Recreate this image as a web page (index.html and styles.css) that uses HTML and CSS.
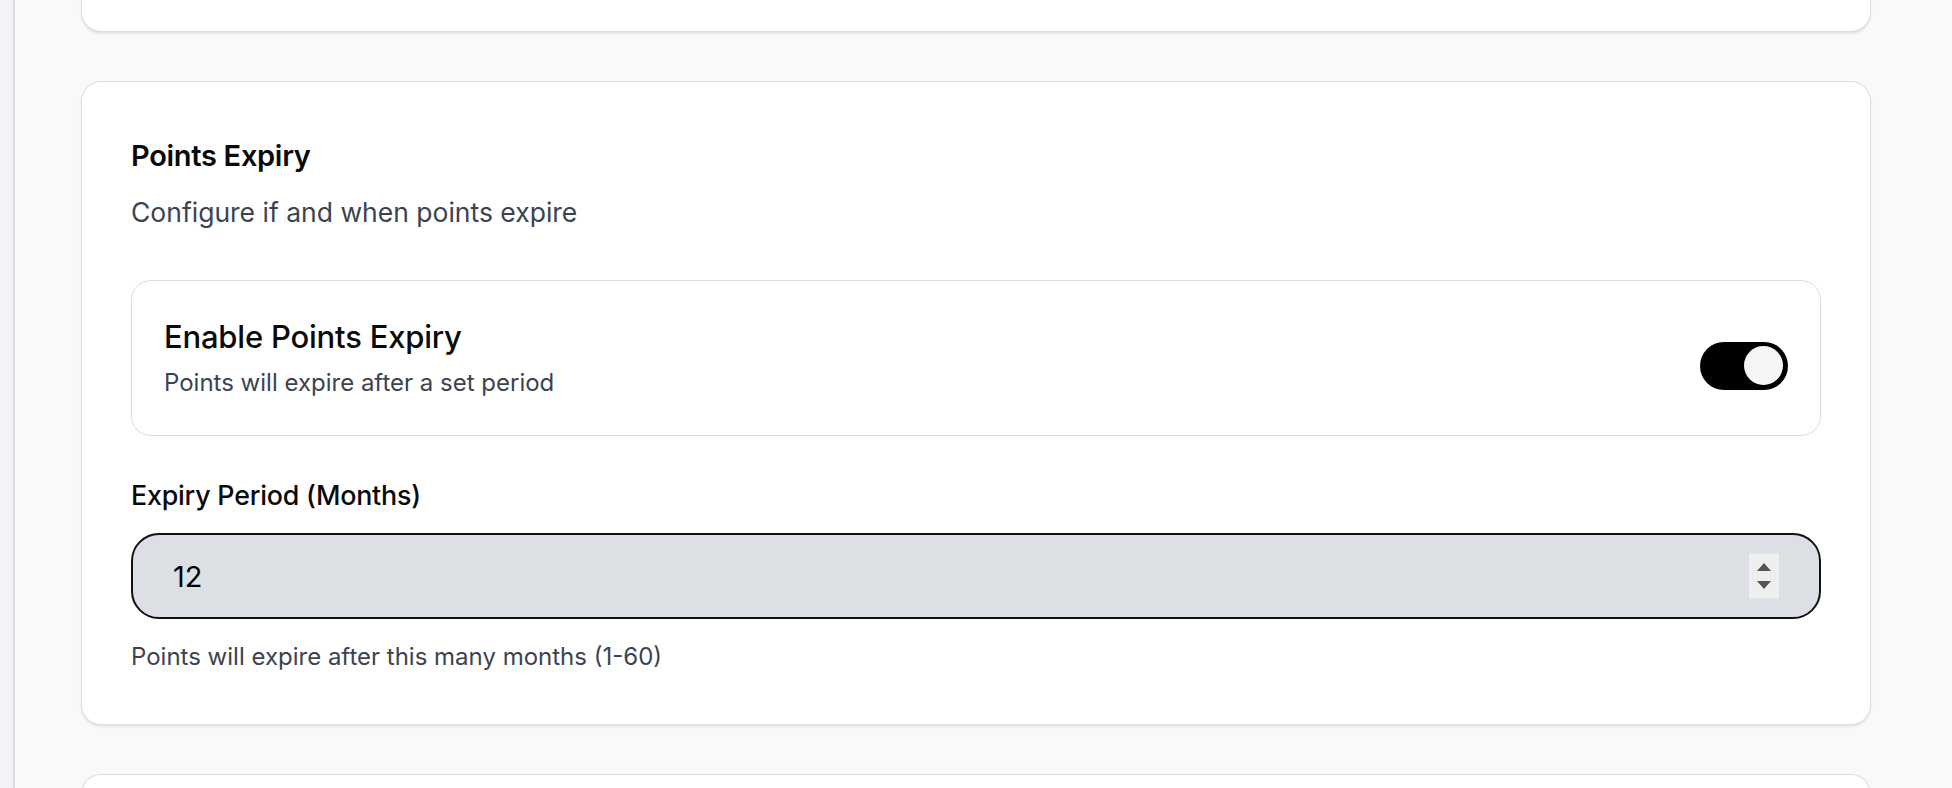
FILE: index.html
```html
<!DOCTYPE html>
<html lang="en">
<head>
  <meta charset="UTF-8">
  <title>Loyalty Settings</title>
  <meta name="viewport" content="width=device-width, initial-scale=1.0">
  <link rel="stylesheet" href="styles.css">
</head>
<body>
  <div class="layout">
    <aside class="sidebar"></aside>

    <main class="content">
      <section class="card card-tail"></section>

      <section class="card">
        <h2 class="card-title">Points Expiry</h2>
        <p class="card-desc">Configure if and when points expire</p>

        <div class="toggle-row">
          <div class="toggle-text">
            <div class="toggle-title">Enable Points Expiry</div>
            <div class="toggle-sub">Points will expire after a set period</div>
          </div>
          <button class="switch is-on" id="expirySwitch" aria-pressed="true">
            <span class="switch-knob"></span>
          </button>
        </div>

        <label class="field-label" for="expiryMonths">Expiry Period (Months)</label>
        <div class="number-field">
          <input id="expiryMonths" class="number-input" type="text" value="12">
          <div class="spinner">
            <svg width="14" height="8" viewBox="0 0 14 8"><polygon points="7,0 14,8 0,8" fill="#545454"/></svg>
            <svg width="14" height="8" viewBox="0 0 14 8"><polygon points="0,0 14,0 7,8" fill="#545454"/></svg>
          </div>
        </div>
        <p class="field-help">Points will expire after this many months (1-60)</p>
      </section>

      <section class="card card-head"></section>
    </main>
  </div>

  <script>
    document.getElementById('expirySwitch').addEventListener('click', function () {
      this.classList.toggle('is-on');
      this.setAttribute('aria-pressed', this.classList.contains('is-on'));
    });
  </script>
</body>
</html>
```

FILE: styles.css
```css
body {
  margin: 0;
  background: #f8f9fa;
  font-family: Inter, "Noto Sans", sans-serif;
  color: #0a0a0a;
  overflow: hidden;
}

.layout {
  display: flex;
  height: 788px;
}

.sidebar {
  width: 13px;
  flex: none;
  background: #f2f3f5;
  border-right: 2px solid #dcdde0;
}

.content {
  flex: 1;
  padding: 0 81px 0 66px;
  display: flex;
  flex-direction: column;
  gap: 49px;
}

.card {
  background: #fff;
  border: 1px solid #dcdcdf;
  border-radius: 20px;
  box-shadow: 0 2px 2px rgba(0, 0, 0, 0.08);
  padding: 56px 49px 51px;
}

.card-tail {
  height: 31px;
  padding: 0;
  border-top: none;
  border-radius: 0 0 20px 20px;
  flex: none;
}

.card-head {
  height: 40px;
  padding: 0;
  flex: none;
  border-bottom: none;
  border-radius: 20px 20px 0 0;
}

.card-title {
  margin: 0;
  font-size: 29px;
  line-height: 36px;
  font-weight: 600;
  letter-spacing: -0.3px;
}

.card-desc {
  margin: 21px 0 0;
  font-size: 26.5px;
  line-height: 34px;
  color: #3c4350;
}

.toggle-row {
  margin-top: 51px;
  border: 1px solid #dcdcdf;
  border-radius: 20px;
  padding: 0 32px;
  height: 154px;
  display: flex;
  align-items: center;
  justify-content: space-between;
}

.toggle-text {
  display: flex;
  flex-direction: column;
  gap: 11px;
}

.toggle-title {
  font-size: 31px;
  line-height: 38px;
  font-weight: 500;
  letter-spacing: -0.2px;
}

.toggle-sub {
  font-size: 24px;
  line-height: 32px;
  color: #3c4350;
}

.switch {
  width: 88px;
  height: 48px;
  margin-top: 15px;
  border: none;
  border-radius: 24px;
  background: #000;
  padding: 0 5px;
  display: flex;
  align-items: center;
  justify-content: flex-end;
  cursor: pointer;
}

.switch:not(.is-on) {
  background: #d1d5db;
  justify-content: flex-start;
}

.switch-knob {
  width: 39px;
  height: 39px;
  border-radius: 50%;
  background: #f5f5f7;
  box-shadow: 0 1px 2px rgba(0, 0, 0, 0.2);
}

.field-label {
  display: block;
  margin-top: 42px;
  font-size: 26.8px;
  line-height: 34px;
  font-weight: 500;
  letter-spacing: -0.2px;
}

.number-field {
  margin-top: 21px;
  height: 82px;
  border: 2px solid #111;
  border-radius: 28px;
  background: #dcdfe4;
  display: flex;
  align-items: center;
  padding: 0 40px 0 40px;
}

.number-input {
  flex: 1;
  border: none;
  background: transparent;
  font-family: inherit;
  font-size: 29px;
  color: #000;
  outline: none;
  padding: 0;
}

.spinner {
  width: 30px;
  height: 44px;
  background: #efefef;
  display: flex;
  flex-direction: column;
  align-items: center;
  justify-content: center;
  gap: 10px;
}

.field-help {
  margin: 22px 0 0;
  font-size: 24px;
  line-height: 32px;
  color: #3c4350;
}
```
